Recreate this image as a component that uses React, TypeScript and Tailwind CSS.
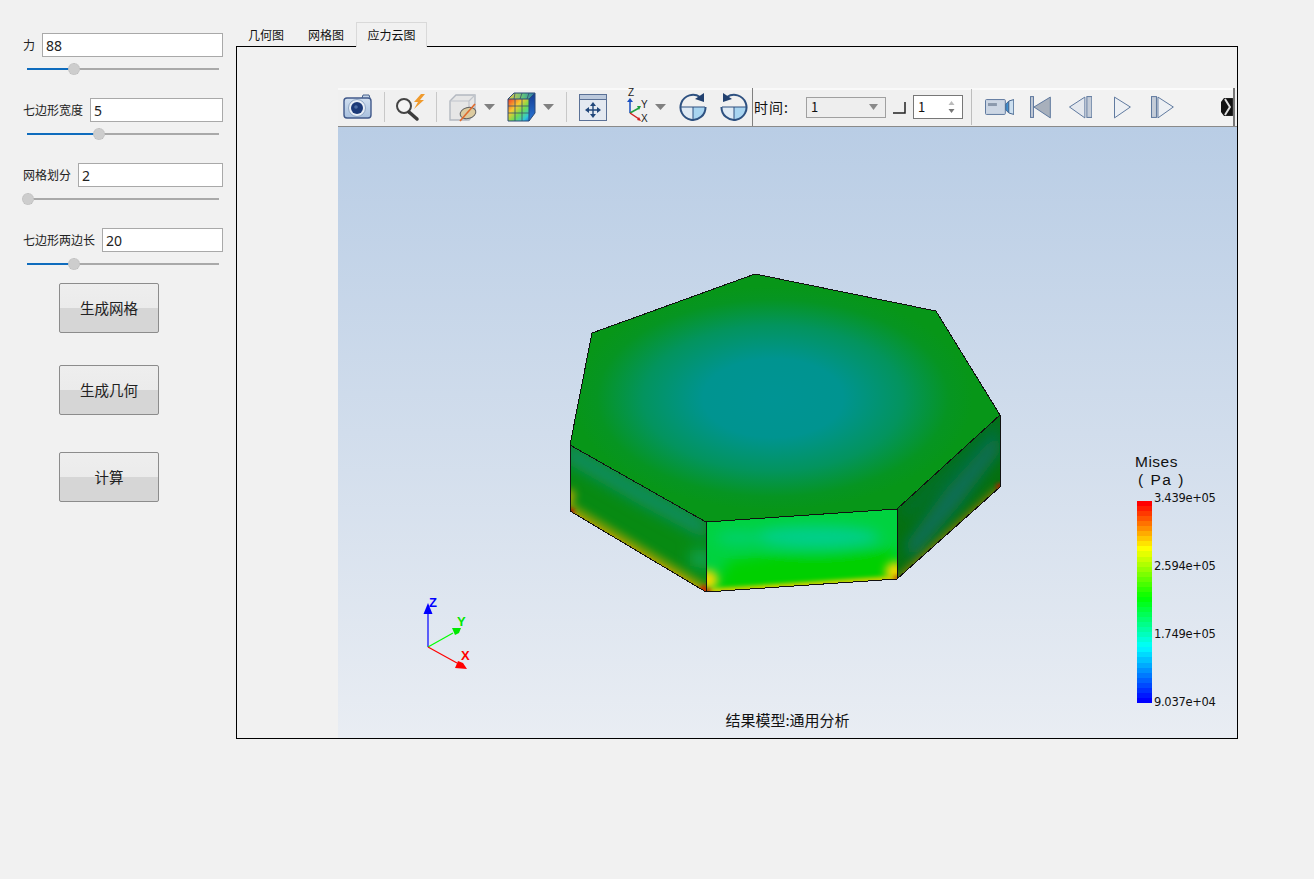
const fontCn = { fontFamily: '"Noto Sans CJK SC", "Noto Sans", sans-serif' }

const params = [
  { label: "力", value: "88", handle: 47 },
  { label: "七边形宽度", value: "5", handle: 72 },
  { label: "网格划分", value: "2", handle: 1 },
  { label: "七边形两边长", value: "20", handle: 47 },
]

function Slider({ handle }: { handle: number }) {
  return (
    <div className="relative ml-[4px] mt-[5px] h-[14px] w-[192px]">
      <div className="absolute left-0 right-0 top-[6px] h-[2px] bg-[#a9a9a9]" />
      <div className="absolute left-0 top-[6px] h-[2px] bg-[#0f6cbd]" style={{ width: handle }} />
      <div
        className="absolute top-[1px] h-[12px] w-[12px] rounded-full bg-[#cdcdcd] border border-dotted border-[#bbbbbb]"
        style={{ left: handle - 6 }}
      />
    </div>
  )
}

function Param({ label, value, handle }: { label: string; value: string; handle: number }) {
  return (
    <div className="h-[65px]">
      <div className="flex items-center gap-[7px]">
        <span className="text-[12px] leading-none whitespace-nowrap text-[#222]">{label}</span>
        <div
          className="flex h-[24px] flex-1 items-center border border-[#a9a9a9] bg-white pl-[3px] text-[14px] text-[#222]"
          style={{ fontFamily: '"Noto Sans", sans-serif' }}
        >
          {value}
        </div>
      </div>
      <Slider handle={handle} />
    </div>
  )
}

function ActionButton({ label, className }: { label: string; className: string }) {
  return (
    <button
      className={`ml-[36px] block h-[50px] w-[100px] rounded-[2px] border border-[#8c8c8c] bg-[linear-gradient(#eeeeee_0%,#ebebeb_50%,#d6d6d6_50%,#d6d6d6_100%)] text-[14.500px] text-[#222] ${className}`}
    >
      {label}
    </button>
  )
}

function Sep({ className }: { className: string }) {
  return <div className={`h-[30px] w-px bg-[#c8c8c8] ${className}`} />
}

function DropArrow({ className }: { className: string }) {
  return (
    <svg className={className} width="11" height="39" viewBox="0 0 11 39">
      <path d="M0 16h11l-5.500 6z" fill="#808080" />
    </svg>
  )
}

function Toolbar() {
  return (
    <div className="flex h-[39px] items-center border-b border-b-[#8a8a8a] bg-[#f0f0f0] text-[#111] shadow-[inset_0_2px_0_#f9f9f9]">
      <svg className="ml-[5px]" width="30" height="39" viewBox="0 0 30 39">
        <defs>
          <linearGradient id="cam" x1="0" y1="0" x2="0" y2="1">
            <stop offset="0" stopColor="#d2e0f0" />
            <stop offset="1" stopColor="#a8c0de" />
          </linearGradient>
        </defs>
        <path d="M19 10l1-3h6l1 3" fill="#c3d3e6" stroke="#46618c" />
        <rect x="1" y="10" width="27" height="20" rx="3" fill="url(#cam)" stroke="#41598a" strokeWidth="1.400" />
        <circle cx="14" cy="20" r="8.500" fill="#e8eef6" stroke="#8fa6c4" />
        <circle cx="14" cy="20" r="6" fill="#1c3a78" />
        <circle cx="13" cy="19" r="1.800" fill="#4e6ea4" />
      </svg>
      <Sep className="ml-[11px]" />
      <svg className="ml-[10px]" width="31" height="39" viewBox="0 0 31 39">
        <circle cx="9" cy="18" r="7" fill="#f5f5f5" stroke="#444" strokeWidth="2" />
        <path d="M14 24l8 7" stroke="#3c3c3c" strokeWidth="3.500" strokeLinecap="round" />
        <path d="M26 6l-7 8h4l-4 7 10-9h-4l5-6z" fill="#ef9a2d" />
      </svg>
      <Sep className="ml-[10px]" />
      <svg className="ml-[11px]" width="30" height="39" viewBox="0 0 30 39">
        <path d="M2 13l6-6h19v18l-6 7H2z" fill="#e6e6e6" stroke="#b3b8c0" strokeWidth="1.400" />
        <path d="M2 13h19v19M21 13l6-6" fill="none" stroke="#c0c4cb" strokeWidth="1.200" />
        <ellipse cx="20" cy="25" rx="8" ry="5.500" fill="#dccba0" stroke="#5f5f5f" transform="rotate(-15 20 25)" />
        <path d="M12 33l15-17" stroke="#e06a2c" strokeWidth="1.600" />
      </svg>
      <DropArrow className="ml-[6px]" />
      <svg className="ml-[12px]" width="30" height="39" viewBox="0 0 30 39">
        <defs>
          <linearGradient id="rub" x1="0" y1="0" x2="1" y2="1">
            <stop offset="0" stopColor="#f03a28" />
            <stop offset="0.35" stopColor="#f8c830" />
            <stop offset="0.6" stopColor="#70dc50" />
            <stop offset="0.85" stopColor="#30c8d8" />
            <stop offset="1" stopColor="#2070e0" />
          </linearGradient>
          <linearGradient id="rubTop" x1="0" y1="0" x2="1" y2="0">
            <stop offset="0" stopColor="#e8c848" />
            <stop offset="0.6" stopColor="#58c080" />
            <stop offset="1" stopColor="#2a70b0" />
          </linearGradient>
          <linearGradient id="rubSide" x1="0" y1="0" x2="0" y2="1">
            <stop offset="0" stopColor="#143a90" />
            <stop offset="1" stopColor="#2a78d8" />
          </linearGradient>
        </defs>
        <path d="M22 11l6-6v20l-6 8z" fill="url(#rubSide)" />
        <path d="M1 11l6-6h21l-6 6z" fill="url(#rubTop)" />
        <rect x="1" y="11" width="21" height="22" fill="url(#rub)" />
        <path d="M8 11v22M15 11v22M1 18h21M1 25h21M8 5l-1 6M15 5l-2 6M22 5l-2 6" stroke="#38506c" strokeWidth=".800" />
        <path d="M1 11l6-6h21v20l-6 8H1zM22 11v22M1 11h21l6-6" fill="none" stroke="#2a4a78" />
      </svg>
      <DropArrow className="ml-[6px]" />
      <Sep className="ml-[12px]" />
      <svg className="ml-[11px]" width="30" height="39" viewBox="0 0 30 39">
        <rect x="1.500" y="6.500" width="27" height="26" fill="#e4e9f1" stroke="#5b7196" />
        <rect x="1.500" y="6.500" width="27" height="5" fill="#bcc9dc" stroke="#5b7196" />
        <path d="M15 14l-3 4h6zM15 30l-3-4h6zM7 22l4-3v6zM23 22l-4-3v6z" fill="#20467a" />
        <path d="M15 17v10M10 22h10" stroke="#20467a" strokeWidth="1.400" />
      </svg>
      <svg className="ml-[15px]" width="28" height="39" viewBox="0 0 28 39">
        <path d="M7 25V13" stroke="#1a4fc0" strokeWidth="1.500" />
        <path d="M7 10l-3 4h6z" fill="#1a4fc0" />
        <path d="M7 25l9-5" stroke="#20a040" strokeWidth="1.500" />
        <path d="M18 18l-4 0 2 4z" fill="#20a040" />
        <path d="M7 25l9 6" stroke="#d02020" strokeWidth="1.500" />
        <path d="M18 33l-4-1 2-3z" fill="#d02020" />
        <text x="5" y="8" fontSize="10" fontFamily="Liberation Sans, sans-serif" fill="#222">Z</text>
        <text x="18" y="20" fontSize="10" fontFamily="Liberation Sans, sans-serif" fill="#222">Y</text>
        <text x="18" y="34" fontSize="10" fontFamily="Liberation Sans, sans-serif" fill="#222">X</text>
      </svg>
      <DropArrow className="ml-[4px]" />
      <svg className="ml-[13px]" width="28" height="39" viewBox="0 0 28 39">
        <path d="M14 19h12a12 12 0 0 1-12 13z" fill="#a8d4f0" />
        <path d="M14 19h-12a12 12 0 0 0 12 13" fill="#dfeaf4" />
        <path d="M21 9a12.500 12.500 0 1 0 5.500 10" fill="none" stroke="#2e5180" strokeWidth="2" />
        <path d="M2 19h24M14 19v13" stroke="#2e5180" strokeWidth="1" />
        <path d="M25 5l0 9-9-3z" fill="#21406f" />
      </svg>
      <svg className="ml-[13px]" width="28" height="39" viewBox="0 0 28 39">
        <path d="M14 19h12a12 12 0 0 1-12 13z" fill="#a8d4f0" />
        <path d="M14 19h-12a12 12 0 0 0 12 13" fill="#dfeaf4" />
        <path d="M7 9a12.500 12.500 0 1 1-5.500 10" fill="none" stroke="#2e5180" strokeWidth="2" />
        <path d="M2 19h24M14 19v13" stroke="#2e5180" strokeWidth="1" />
        <path d="M3 5l0 9 9-3z" fill="#21406f" />
      </svg>
      <div className="ml-[4px] h-[38px] w-px bg-[#808080]" />
      <span className="ml-px w-[36px] text-[14px] tracking-[1px] whitespace-nowrap">时间:</span>
      <div className="ml-[16px] flex h-[21px] w-[80px] items-center justify-between border border-[#a0a0a0] bg-[#eeeeee] pl-[4px] pr-[7px] text-[13px]">
        <span>1</span>
        <svg width="9" height="6" viewBox="0 0 9 6">
          <path d="M0 0h9l-4.500 6z" fill="#8a8a8a" />
        </svg>
      </div>
      <svg className="ml-[7px]" width="13" height="13" viewBox="0 0 13 13">
        <path d="M0 12h12V1" fill="none" stroke="#222" strokeWidth="1.500" />
      </svg>
      <div className="ml-[7px] flex h-[24px] w-[50px] items-center justify-between border border-[#777777] bg-white pl-[4px] pr-[7px] text-[13px]">
        <span>1</span>
        <svg width="7" height="14" viewBox="0 0 7 14">
          <path d="M3.500 1l3 4h-6z" fill="#bbbbbb" />
          <path d="M3.500 13l3-4h-6z" fill="#777777" />
        </svg>
      </div>
      <div className="ml-[8px] h-[36px] w-px bg-[#bdbdbd]" />
      <div className="ml-[8px] flex h-[38px] w-[255px] items-center border-r-2 border-[#777777] bg-[#f2f2f2] pt-[2px] shadow-[inset_0_2px_0_#fbfbfb]">
        <svg className="ml-[5px]" width="29" height="36" viewBox="0 0 29 36">
          <rect x=".500" y="9.500" width="20" height="15" rx="1" fill="#ccd6e4" stroke="#5e789e" />
          <rect x="3" y="13" width="9" height="3" fill="#8b99ad" />
          <path d="M21 14l3-3v12l-3-3z" fill="#3f8fd0" stroke="#45658f" />
          <path d="M24 11l5-1.500v15L24 23z" fill="#cde0f0" stroke="#45658f" />
        </svg>
        <svg className="ml-[16px]" width="21" height="36" viewBox="0 0 21 36">
          <rect x=".500" y="6.500" width="3" height="21" fill="#c0c8d4" stroke="#5e789e" />
          <path d="M4 17L20.500 7v21z" fill="#a8b0bc" stroke="#5e789e" />
        </svg>
        <svg className="ml-[18px]" width="24" height="36" viewBox="0 0 24 36">
          <path d="M.500 17L16 7v21z" fill="#e4e8ee" stroke="#5e789e" />
          <rect x="18" y="6.500" width="5" height="21" fill="#c4ccd8" stroke="#5e789e" />
        </svg>
        <svg className="ml-[22px]" width="17" height="36" viewBox="0 0 17 36">
          <path d="M.500 7l16 10-16 11z" fill="#edf0f4" stroke="#5e789e" />
        </svg>
        <svg className="ml-[20px]" width="23" height="36" viewBox="0 0 23 36">
          <rect x=".500" y="6.500" width="5" height="21" fill="#c4ccd8" stroke="#5e789e" />
          <path d="M7 7l15.500 10L7 28z" fill="#edf0f4" stroke="#5e789e" />
        </svg>
        <svg className="ml-[47px]" width="12" height="36" viewBox="0 0 12 36">
          <rect x="0" y="8" width="12" height="18" fill="#111" />
          <path d="M0 8h3L0 12zM0 26h3l-3-4z" fill="#f2f2f2" />
          <path d="M4 9l5 8-5 8" fill="none" stroke="#dddddd" strokeWidth="2" />
        </svg>
      </div>
    </div>
  )
}

const barColor = (t: number) => {
  // t: 0 top (max) .. 1 bottom (min)
  const stops: [number, number[]][] = [
    [0, [255, 0, 0]],
    [0.23, [255, 255, 0]],
    [0.48, [0, 255, 0]],
    [0.73, [0, 255, 255]],
    [1, [0, 0, 255]],
  ]
  for (let i = 1; i < stops.length; i++) {
    if (t <= stops[i][0]) {
      const [a, ca] = stops[i - 1]
      const [b, cb] = stops[i]
      const k = (t - a) / (b - a)
      return `rgb(${ca.map((v, j) => Math.round(v + (cb[j] - v) * k)).join(",")})`
    }
  }
  return "rgb(0,0,255)"
}

function Legend() {
  const bands = Array.from({ length: 40 }, (_, i) => i)
  return (
    <div className="absolute left-[797px] top-[326px] text-[#111]" style={{ fontFamily: '"DejaVu Sans", sans-serif' }}>
      <div className="h-[18px] text-[15.500px] leading-[18px] tracking-[0.5px]" style={{ fontFamily: '"Liberation Sans", sans-serif' }}>
        Mises
      </div>
      <div className="ml-[3px] h-[18px] text-[15.500px] leading-[18px] tracking-[1.500px]" style={{ fontFamily: '"Liberation Sans", sans-serif' }}>
        ( Pa )
      </div>
      <div className="mt-[12px] flex h-[202px]">
        <div className="ml-[2px] flex h-full w-[15px] flex-col">
          {bands.map((i) => (
            <div key={i} className="flex-1" style={{ background: barColor(i / 39) }} />
          ))}
        </div>
        <div className="relative -mb-[5px] -mt-[9px] ml-[2px] flex flex-col justify-between text-[11.500px] leading-[12px] tracking-[-0.3px]">
          <span>3.439e+05</span>
          <span>2.594e+05</span>
          <span>1.749e+05</span>
          <span>9.037e+04</span>
        </div>
      </div>
    </div>
  )
}

function Model() {
  const top = "592,333 755,274 936,311 1000,415 897,509 706,522 570,445"
  const left = "570,445 706,522 706,592 570,511"
  const front = "706,522 897,509 897,579 706,592"
  const right = "897,509 1000,415 1000,487 897,579"
  return (
    <svg className="absolute inset-0" width="899" height="611" viewBox="338 127 899 611">
      <defs>
        <radialGradient id="teal" cx="0.5" cy="0.5" r="0.5">
          <stop offset="0" stopColor="#009494" />
          <stop offset="0.35" stopColor="#009490" />
          <stop offset="0.65" stopColor="#03945e" />
          <stop offset="0.88" stopColor="#069522" />
          <stop offset="1" stopColor="#079618" />
        </radialGradient>
        <clipPath id="ct"><polygon points={top} /></clipPath>
        <clipPath id="cl"><polygon points={left} /></clipPath>
        <clipPath id="cf"><polygon points={front} /></clipPath>
        <clipPath id="cr"><polygon points={right} /></clipPath>
        <filter id="b2" x="-30%" y="-30%" width="160%" height="160%"><feGaussianBlur stdDeviation="2" /></filter>
        <filter id="b4" x="-30%" y="-30%" width="160%" height="160%"><feGaussianBlur stdDeviation="4" /></filter>
        <filter id="b5" x="-30%" y="-30%" width="160%" height="160%"><feGaussianBlur stdDeviation="7" /></filter>
      </defs>
      <g clipPath="url(#ct)">
        <polygon points={top} fill="#079618" />
        <ellipse cx="773" cy="398" rx="200" ry="112" fill="url(#teal)" />
      </g>
      <g clipPath="url(#cl)">
        <polygon points={left} fill="#078a12" />
        <g filter="url(#b5)">
          <polygon points="565,440 706,520 706,540 640,505 565,462" fill="#0a8c5c" />
          <polygon points="690,550 712,550 712,570 690,566" fill="#0aa050" />
        </g>
        <g filter="url(#b4)">
          <polyline points="560,502 706,590" stroke="#9aa000" strokeWidth="8" fill="none" />
          <circle cx="568" cy="496" r="7" fill="#c0a800" />
        </g>
        <g filter="url(#b2)">
          <polyline points="570,512 706,593" stroke="#c8a000" strokeWidth="4" fill="none" />
          <circle cx="570" cy="513" r="5" fill="#b81000" />
          <circle cx="704" cy="591" r="6" fill="#c83000" />
        </g>
      </g>
      <g clipPath="url(#cf)">
        <polygon points={front} fill="#00d23f" />
        <g filter="url(#b5)">
          <ellipse cx="815" cy="537" rx="65" ry="11" fill="#00cf8c" />
          <ellipse cx="740" cy="538" rx="25" ry="7" fill="#00d070" />
          <polygon points="715,585 730,560 800,550 870,546 897,552 897,590 706,600" fill="#00d000" />
        </g>
        <g filter="url(#b4)">
          <circle cx="708" cy="580" r="10" fill="#f0d800" />
          <circle cx="895" cy="572" r="10" fill="#f0d800" />
        </g>
        <g filter="url(#b2)">
          <polyline points="706,592 897,579" stroke="#e0d000" strokeWidth="6" fill="none" />
          <circle cx="708" cy="592" r="4" fill="#d02800" />
          <circle cx="897" cy="579" r="4" fill="#c86000" />
        </g>
      </g>
      <g clipPath="url(#cr)">
        <polygon points={right} fill="#04700f" />
        <g filter="url(#b5)">
          <polygon points="905,545 945,490 1000,430 1000,452 960,505 912,560" fill="#0a6e58" />
          <polygon points="900,510 1000,415 1000,428 905,520" fill="#067030" />
        </g>
        <g filter="url(#b4)">
          <polyline points="897,581 1000,489" stroke="#a87800" strokeWidth="6" fill="none" />
        </g>
        <g filter="url(#b2)">
          <circle cx="1000" cy="487" r="4" fill="#a82000" />
        </g>
      </g>
      <g fill="none" stroke="#111" strokeWidth="1" shapeRendering="crispEdges">
        <polygon points={top} />
        <polyline points="570,445 570,511 706,592 897,579 1000,487 1000,415" />
        <polyline points="706,522 706,592" />
        <polyline points="897,509 897,579" />
      </g>
      <g fontFamily="Liberation Sans, sans-serif" fontWeight="700" fontSize="13">
        <path d="M428 647V612" stroke="#0000ff" strokeWidth="1.200" />
        <path d="M428 603l-4.500 11h9z" fill="#0000ff" />
        <text x="429" y="607" fill="#0000ff">Z</text>
        <path d="M428 647L453 633" stroke="#00ff00" strokeWidth="1.200" />
        <path d="M461 628l-9 0 3 7 4-2z" fill="#00e800" />
        <text x="457" y="626" fill="#00e800">Y</text>
        <path d="M428 647L457 663" stroke="#ff0000" strokeWidth="1.200" />
        <path d="M455 668l3-7 5 2 4 6z" fill="#ff0000" />
        <text x="461" y="660" fill="#ff0000">X</text>
      </g>
    </svg>
  )
}

export default function App() {
  return (
    <div className="flex h-[879px] w-[1314px] bg-[#f1f1f1]" style={fontCn}>
      <aside className="w-[236px] shrink-0 pl-[23px] pr-[13px] pt-[33px]">
        {params.map((p) => (
          <Param key={p.label} {...p} />
        ))}
        <ActionButton label="生成网格" className="-mt-[10px]" />
        <ActionButton label="生成几何" className="mt-[32px]" />
        <ActionButton label="计算" className="mt-[37px]" />
      </aside>
      <main className="pt-[22px]">
        <div className="flex h-[25px] text-[12px] text-[#111]">
          <div className="flex w-[60px] items-center justify-center">几何图</div>
          <div className="flex w-[60px] items-center justify-center">网格图</div>
          <div className="relative z-10 flex h-[25px] w-[71px] items-center justify-center border border-b-0 border-[#d9d9d9] bg-[#f1f1f1]">
            应力云图
          </div>
        </div>
        <div className="-mt-px h-[693px] w-[1002px] border border-black pl-[101px] pt-[41px]">
          <div className="flex h-[650px] w-[899px] flex-col">
            <Toolbar />
            <div className="relative flex-1 bg-[linear-gradient(#b9cde5,#e9edf3)]">
              <Model />
              <Legend />
              <div className="absolute bottom-[11px] left-0 right-0 text-center text-[15px] leading-none text-[#111]">
                结果模型:通用分析
              </div>
            </div>
          </div>
        </div>
      </main>
    </div>
  )
}
